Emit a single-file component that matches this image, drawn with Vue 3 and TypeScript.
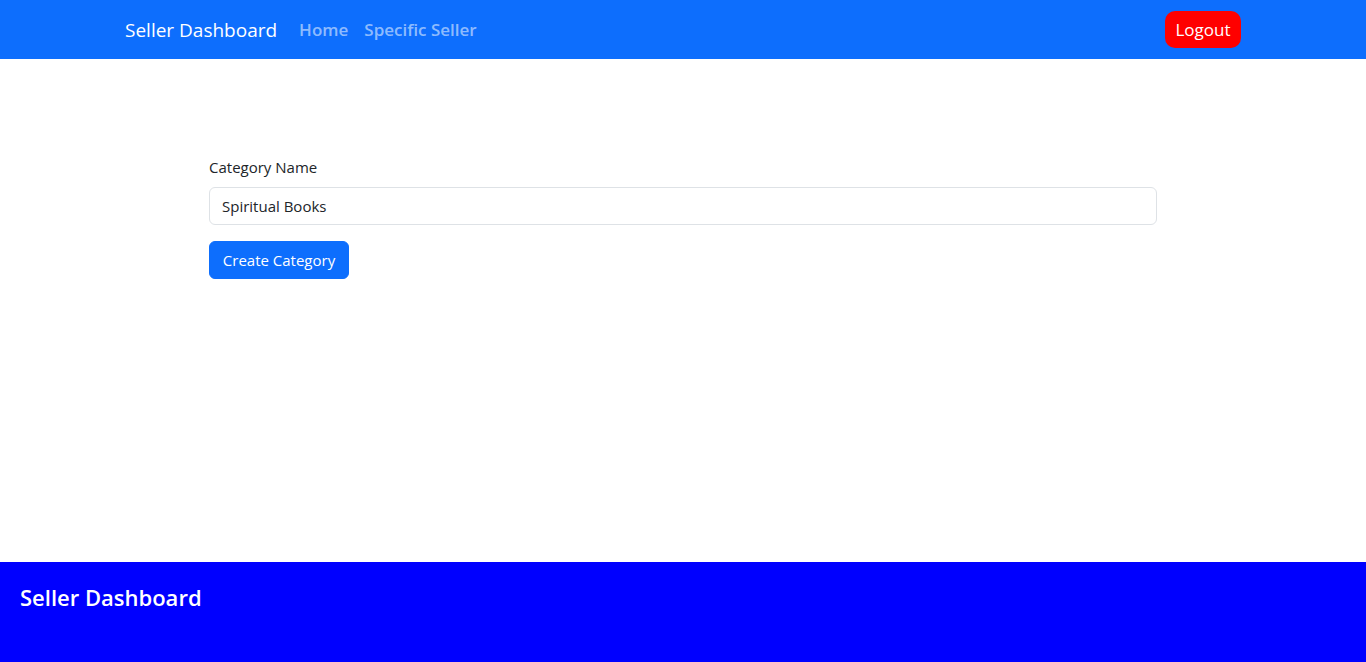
<script setup lang="ts">
import { ref } from 'vue'

const categoryName = ref<string>('Spiritual Books')
const links: string[] = ['Home', 'Specific Seller']
</script>

<template>
  <div class="page">
    <header class="navbar">
      <div class="container">
        <a class="brand" href="#">Seller Dashboard</a>
        <nav class="links">
          <a v-for="link in links" :key="link" class="link" href="#">{{ link }}</a>
        </nav>
        <button class="logout" type="button">Logout</button>
      </div>
    </header>

    <main class="content">
      <form class="form" @submit.prevent>
        <label class="label" for="category-name">Category Name</label>
        <input id="category-name" v-model="categoryName" class="field" type="text" />
        <button class="submit" type="submit">Create Category</button>
      </form>
    </main>

    <footer class="footer">
      <h2 class="footer-title">Seller Dashboard</h2>
    </footer>
  </div>
</template>

<style>
body {
  margin: 0;
}
</style>

<style scoped>
.page {
  display: flex;
  flex-direction: column;
  min-height: 100vh;
  background: #fff;
  color: #212529;
  font: 16px/24px "Segoe UI", "Open Sans", "Noto Sans", sans-serif;
}

.page * {
  box-sizing: border-box;
}

.navbar {
  padding: 8px 0;
  background: #0d6efd;
}

.container {
  display: flex;
  align-items: center;
  max-width: 1140px;
  min-height: 43px;
  margin: 0 auto;
  padding: 0 12px;
}

.brand {
  margin-right: 14px;
  color: #fff;
  font-size: 19px;
  line-height: 30px;
  text-decoration: none;
}

.links {
  display: flex;
}

.link {
  padding: 8px;
  color: rgba(255, 255, 255, 0.55);
  font-size: 17px;
  font-weight: 600;
  text-decoration: none;
}

.logout {
  min-width: 76px;
  margin-left: auto;
  padding: 5px 10px;
  border: 0;
  border-radius: 10px;
  background: #f00;
  color: #fff;
  font: inherit;
  font-size: 17px;
  line-height: 27px;
}

.content {
  flex: 1;
  width: 100%;
  max-width: 972px;
  box-sizing: border-box;
  margin: 0 auto;
  padding: 96px 12px;
}

.form {
  display: flex;
  flex-direction: column;
  align-items: flex-start;
}

.label {
  margin-bottom: 8px;
  font-size: 15px;
}

.field {
  width: 100%;
  height: 38px;
  margin: 0 0 16px;
  padding: 6px 12px;
  border: 1px solid #dee2e6;
  border-radius: 6px;
  background: #fff;
  color: #212529;
  font: inherit;
  font-size: 15px;
}

.submit {
  min-width: 140px;
  height: 38px;
  padding: 6px 12px;
  border: 1px solid #0d6efd;
  border-radius: 6px;
  background: #0d6efd;
  color: #fff;
  font: inherit;
  font-size: 15px;
}

.footer {
  min-height: 100px;
  padding: 20px;
  background: #00f;
}

.footer-title {
  margin: 0;
  color: #fff;
  font-size: 22px;
  font-weight: 600;
  line-height: 30px;
}
</style>
